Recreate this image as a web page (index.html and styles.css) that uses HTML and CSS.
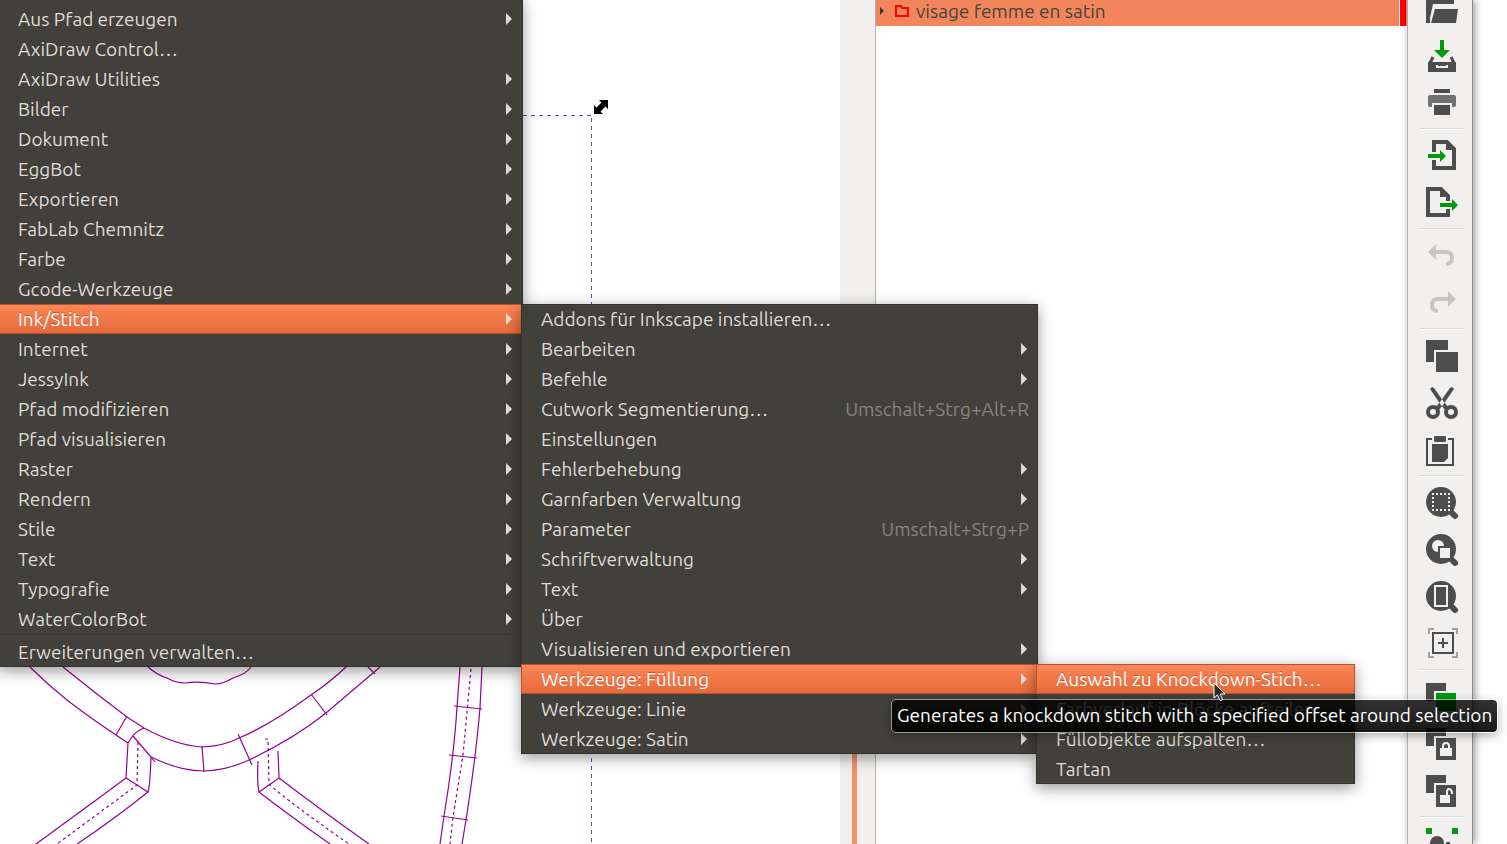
FILE: index.html
```html
<!DOCTYPE html>
<html lang="de">
<head>
    <meta charset="UTF-8">
    <meta name="viewport" content="width=device-width, initial-scale=1.0">
    <title>Inkscape</title>
    <link rel="stylesheet" href="styles.css">
</head>
<body>
    <div class="app">
        <main class="canvas">
            <svg class="drawing" width="620" height="844" viewBox="0 0 620 844">
                <!-- selection frame -->
                <path class="selection" d="M523 115.500H591M591.500 118V844"/>
                <path d="M599 100H608V109L605.500 106.500L600.500 111.500L603 114H594V105L596.500 107.500L601.500 102.500Z"/>
                <g class="outline">
                    <path d="M30 667Q48 685 67 700Q90 718 128 743"/>
                    <path d="M63 667Q95 693 127 717L144 728Q175 745 202 747Q224 746 239 738Q270 725 311 695Q329 683 346 667"/>
                    <path d="M151 757Q180 771 203 771Q225 771 249 760Q295 738 326 713L380 667"/>
                    <path d="M127 716L116 735M202 746L204 772M238 734L252 765M311 694L327 715M368 667L375 674"/>
                    <path d="M144 728Q136 731 132 737L128 743L126 778L148 792Q150 786 151 757L133 736M151 757L155 762"/>
                    <path d="M126 778Q80 812 36 844M148 792Q113 820 77 844"/>
                    <path d="M258 761Q257 784 259 792L279 778L278 751M279 778Q325 813 369 844M259 792Q290 816 330 844"/>
                    <path d="M148 667Q157 675 167 678Q176 683 185 683C197 681 205 682 215 684Q223 684 233 678Q246 674 251 667"/>
                    <path d="M460 667L457 707Q454 756 444 816L440 844M482 667L480 708Q476 756 466 820L462 844"/>
                    <path d="M454 706L482 709M449 755L477 758M441 816L468 820"/>
                    <path class="dashes" d="M138 742L137 785L57 844M265 739H268L269 784Q290 803 349 844M471 669L463 755L453 817L450 844"/>
                </g>
            </svg>
        </main>

        <div class="gutter"></div>

        <section class="objects">
            <div class="object-row">
                <svg class="object-expander" width="6" height="8" viewBox="0 0 6 8"><path d="M1 0L5 4L1 8Z"/></svg>
                <svg class="object-folder" width="14" height="12" viewBox="0 0 14 12"><path d="M1 11V1H6L7 3H13V11Z"/></svg>
                <span>visage femme en satin</span>
                <span class="object-color"></span>
            </div>
        </section>

        <div class="toolbar">
            <button aria-label="Öffnen"><svg viewBox="0 0 32 32">
                <path d="M0 2H18L20 8H28V12H7L4 26V31H0Z"/><path d="M9 17H32L30 31H5Z"/></svg></button>
            <button aria-label="Speichern"><svg viewBox="0 0 32 32">
                <path class="green" d="M14 1H18V11H24L16 19L8 11H14Z"/>
                <path d="M2 23H30V33H2ZM10 26V29H22V26H20V27H12V26Z" fill-rule="evenodd"/>
                <path class="stroke" d="M4 24L7 18M28 24L25 18" stroke-width="3"/></svg></button>
            <button aria-label="Drucken"><svg viewBox="0 0 32 32">
                <path d="M8 3H24V7H8ZM8 19H24V29H8Z"/><path class="gray" d="M4 9H28Q30 9 30 11V19Q30 21 28 21H26V17H6V21H4Q2 21 2 19V11Q2 9 4 9Z"/></svg></button>
            <hr>
            <button aria-label="Importieren"><svg viewBox="0 0 32 32">
                <path class="stroke" d="M8 13V3H21L28 10V29H8V21" stroke-width="4"/><path d="M20 3V11H29Z"/>
                <path class="green" d="M2 15H14V11L20 17L14 23V19H2Z"/></svg></button>
            <button aria-label="Exportieren"><svg viewBox="0 0 32 32">
                <path class="stroke" d="M22 15V10L15 3H2V29H22V23" stroke-width="4"/><path d="M14 3V11H23Z"/>
                <path class="green" d="M14 17H26V13L32 19L26 25V21H14Z"/></svg></button>
            <hr>
            <button aria-label="Rückgängig" disabled><svg viewBox="0 0 32 32">
                <path d="M2 13L10 5V21Z"/><path class="stroke" d="M9 13H20Q26 13 26 19T20 25" stroke-width="4"/></svg></button>
            <button aria-label="Wiederherstellen" disabled><svg viewBox="0 0 32 32">
                <path d="M30 13L22 5V21Z"/><path class="stroke" d="M23 13H12Q6 13 6 19T12 25" stroke-width="4"/></svg></button>
            <hr>
            <button aria-label="Kopieren"><svg viewBox="0 0 32 32">
                <path d="M0 1H22V11H8V23H0ZM10 13H32V33H10Z"/></svg></button>
            <button aria-label="Ausschneiden"><svg viewBox="0 0 32 32">
                <path d="M4 3L6 1L8 2L18 16L23 22L20 25L15 19ZM28 3L26 1L24 2L14 16L9 22L12 25L17 19Z"/>
                <circle class="stroke" cx="7" cy="26" r="5" stroke-width="4"/><circle class="stroke" cx="25" cy="26" r="5" stroke-width="4"/></svg></button>
            <button aria-label="Einfügen"><svg viewBox="0 0 32 32">
                <path class="stroke" d="M6 6H1V32H27V6H22" stroke-width="2"/><rect x="8" y="3" width="12" height="6" rx="1"/>
                <path d="M6 11H22V25L18 29H6Z"/></svg></button>
            <hr>
            <button aria-label="Auswahl zoomen"><svg viewBox="0 0 32 32">
                <circle cx="15" cy="16" r="15"/><path class="handle" d="M24 25L29 30"/>
                <path class="light-stroke" d="M6 8H25M6 24H25M7 11V23M23 11V23" stroke-dasharray="2 2"/></svg></button>
            <button aria-label="Zeichnung zoomen"><svg viewBox="0 0 32 32">
                <circle cx="15" cy="16" r="15"/><path class="handle" d="M24 25L29 30"/>
                <circle class="light" cx="12" cy="13" r="6"/><path d="M12 13H26V27H12Z"/><path class="light" d="M14 15H24V25H14Z"/></svg></button>
            <button aria-label="Seite zoomen"><svg viewBox="0 0 32 32">
                <circle cx="15" cy="16" r="15"/><path class="handle" d="M24 25L29 30"/>
                <path class="light-stroke" d="M9 6H21V26H9Z"/></svg></button>
            <button aria-label="Seite zentrieren"><svg viewBox="0 0 32 32">
                <path class="corner" d="M3 7V2H8M26 2H31V7M31 25V30H26M8 30H3V25"/>
                <path class="stroke" d="M7 6H27V26H7ZM12 16H22M17 11V21" stroke-width="2"/></svg></button>
            <hr>
            <button aria-label="Duplizieren"><svg viewBox="0 0 32 32">
                <path d="M0 3H20V11H8V21H0Z"/><path class="green" d="M10 13H30V31H10Z"/></svg></button>
            <button aria-label="Klonen"><svg viewBox="0 0 32 32">
                <path d="M0 1H20V9H8V19H0ZM10 11H30V33H10Z"/><path class="light" d="M14 21H26V29H14Z"/>
                <path class="light-stroke" d="M17 22V19Q17 16 20 16T23 19V22"/></svg></button>
            <button aria-label="Klonverbindung auftrennen"><svg viewBox="0 0 32 32">
                <path d="M0 1H20V9H8V19H0ZM10 11H30V33H10Z"/><path class="light" d="M14 21H24V29H14Z"/>
                <path class="light-stroke" d="M21 22V18Q21 15 23 15T26 18V20"/></svg></button>
            <hr>
            <button aria-label="Gruppieren"><svg viewBox="0 0 32 32">
                <path class="green" d="M0 1H6V7H0ZM26 1H32V7H26Z"/><circle cx="11" cy="16" r="7"/><path d="M20 15H24V20H20Z"/></svg></button>
        </div>
        <div class="margin"></div>
    </div>

    <ul class="menu menu-extensions">
        <li><button class="has-submenu">Aus Pfad erzeugen</button></li>
        <li><button>AxiDraw Control…</button></li>
        <li><button class="has-submenu">AxiDraw Utilities</button></li>
        <li><button class="has-submenu">Bilder</button></li>
        <li><button class="has-submenu">Dokument</button></li>
        <li><button class="has-submenu">EggBot</button></li>
        <li><button class="has-submenu">Exportieren</button></li>
        <li><button class="has-submenu">FabLab Chemnitz</button></li>
        <li><button class="has-submenu">Farbe</button></li>
        <li><button class="has-submenu">Gcode-Werkzeuge</button></li>
        <li>
            <button class="has-submenu active">Ink/Stitch</button>
            <ul class="menu menu-inkstitch">
                <li><button>Addons für Inkscape installieren…</button></li>
                <li><button class="has-submenu">Bearbeiten</button></li>
                <li><button class="has-submenu">Befehle</button></li>
                <li><button>Cutwork Segmentierung… <kbd>Umschalt+Strg+Alt+R</kbd></button></li>
                <li><button>Einstellungen</button></li>
                <li><button class="has-submenu">Fehlerbehebung</button></li>
                <li><button class="has-submenu">Garnfarben Verwaltung</button></li>
                <li><button>Parameter <kbd>Umschalt+Strg+P</kbd></button></li>
                <li><button class="has-submenu">Schriftverwaltung</button></li>
                <li><button class="has-submenu">Text</button></li>
                <li><button>Über</button></li>
                <li><button class="has-submenu">Visualisieren und exportieren</button></li>
                <li>
                    <button class="has-submenu active">Werkzeuge: Füllung</button>
                    <ul class="menu menu-fill">
                        <li>
                            <button class="active">Auswahl zu Knockdown-Stich…</button>
                            <div class="tooltip" role="tooltip">Generates a knockdown stitch with a specified offset around selection</div>
                            <svg class="pointer" width="14" height="20" viewBox="0 0 14 20"><path d="M1 1V16L4.500 13L7 18.500L9.500 17.500L7.200 12H12Z"/></svg>
                        </li>
                        <li><button>Farbverlauf in Blöcke aufteilen</button></li>
                        <li><button>Füllobjekte aufspalten…</button></li>
                        <li><button>Tartan</button></li>
                    </ul>
                </li>
                <li><button class="has-submenu">Werkzeuge: Linie</button></li>
                <li><button class="has-submenu">Werkzeuge: Satin</button></li>
            </ul>
        </li>
        <li><button class="has-submenu">Internet</button></li>
        <li><button class="has-submenu">JessyInk</button></li>
        <li><button class="has-submenu">Pfad modifizieren</button></li>
        <li><button class="has-submenu">Pfad visualisieren</button></li>
        <li><button class="has-submenu">Raster</button></li>
        <li><button class="has-submenu">Rendern</button></li>
        <li><button class="has-submenu">Stile</button></li>
        <li><button class="has-submenu">Text</button></li>
        <li><button class="has-submenu">Typografie</button></li>
        <li><button class="has-submenu">WaterColorBot</button></li>
        <li class="divided"><button>Erweiterungen verwalten…</button></li>
    </ul>
</body>
</html>
```

FILE: styles.css
```css
* {
    box-sizing: border-box;
}

body {
    margin: 0;
    overflow: hidden;
    background: #fff;
    font-family: Ubuntu, "Noto Sans", sans-serif;
    font-size: 19px;
}

button {
    border: 0;
    background: none;
    font: inherit;
    color: inherit;
}

/* Main window */
.app {
    display: flex;
    height: 100vh;
    overflow: hidden;
}

.canvas {
    flex: 1;
    overflow: hidden;
}

.drawing {
    display: block;
}

.selection {
    fill: none;
    stroke: #5353c8;
    stroke-dasharray: 4 4;
}

.outline {
    fill: none;
    stroke: #960096;
    stroke-width: 1.2;
}

.dashes {
    stroke-dasharray: 3 3;
}

.gutter {
    width: 35px;
    padding: 0 18px 0 12px;
    background: #f1f0ee;
}

.gutter::before {
    content: "";
    display: block;
    height: 100%;
    background: linear-gradient(transparent 500px, #f4906a 500px);
}

.objects {
    width: 532px;
    border-left: 1px solid #b6b3ae;
    background: #fff;
}

.object-row {
    display: flex;
    align-items: center;
    height: 26px;
    padding: 0 1px 4px 3px;
    background: #f2855b;
    color: #45443f;
}

.object-expander {
    margin-right: 10px;
    fill: #3c3b37;
}

.object-folder {
    margin-right: 7px;
    fill: none;
    stroke: #f00;
    stroke-width: 2;
}

.object-color {
    width: 7px;
    height: 26px;
    margin: 4px 0 0 auto;
    border-left: 1px solid #fff;
    background: #f00;
}

/* Command bar */
.toolbar {
    width: 66px;
    padding: 0 7px 0 11px;
    border-left: 1px solid #b6b3ae;
    border-right: 1px solid #8c8a86;
    background: #f1f0ee;
    box-shadow: 2px 0 8px rgba(0, 0, 0, 0.4);
}

.toolbar button {
    display: block;
    height: 47px;
    padding: 7px 7px 8px;
}

.toolbar button:first-child {
    margin-top: -15px;
}

.toolbar svg {
    display: block;
    width: 32px;
    height: 32px;
    overflow: visible;
    fill: #4d4d4d;
    stroke-width: 2;
}

.toolbar button:disabled {
    opacity: 0.25;
}

.toolbar hr {
    height: 2px;
    margin: 2px 0;
    border: 0;
    border-top: 1px solid #dcdad7;
    border-bottom: 1px solid #fff;
}

.toolbar .stroke {
    fill: none;
    stroke: #4d4d4d;
}

.toolbar .handle {
    stroke: #4d4d4d;
    stroke-width: 6;
    stroke-linecap: round;
}

.toolbar .corner {
    fill: none;
    stroke: #a3a2a1;
}

.toolbar .light {
    fill: #f1f0ee;
}

.toolbar .light-stroke {
    fill: none;
    stroke: #f1f0ee;
}

.toolbar .green {
    fill: #00980f;
}

.toolbar .gray {
    fill: #707070;
}

.margin {
    width: 34px;
}

/* Menus */
.menu {
    position: absolute;
    margin: 0;
    padding: 0;
    list-style: none;
    background: #42403a;
    color: #dfdbd2;
    box-shadow: inset 0 0 0 1px #33322e, 0 4px 14px rgba(0, 0, 0, 0.4);
}

.menu li {
    position: relative;
}

.menu button {
    display: flex;
    align-items: center;
    justify-content: space-between;
    width: 100%;
    height: 30px;
    padding: 0 9px 0 20px;
    line-height: 30px;
    white-space: nowrap;
}

.menu .active {
    background: linear-gradient(#fb8757, #e5683a);
    box-shadow: inset 0 0 0 1px #b9532c;
    color: #fff;
    text-shadow: 0 -1px rgba(0, 0, 0, 0.25);
}

.has-submenu::after {
    content: "";
    border: 6px solid transparent;
    border-left-color: #dfdbd2;
    border-right: 0;
}

.menu kbd {
    font: inherit;
    color: #85837c;
}

/* opened further up, so its top and left edges are off screen */
.menu-extensions {
    top: -2px;
    left: -2px;
    width: 525px;
    padding-top: 6px;
}

.menu button.has-submenu {
    padding-right: 11px;
}

.menu-inkstitch {
    top: 0;
    left: calc(100% - 2px);
    width: 517px;
}

.menu-fill {
    top: 0;
    left: calc(100% - 2px);
    width: 319px;
}

.divided {
    padding-top: 2px;
    border-top: 1px solid #383732;
}

.tooltip {
    position: absolute;
    z-index: 1;
    top: 35px;
    left: -145px;
    padding: 0 5px 2px;
    border: 1px solid rgba(255, 255, 255, 0.45);
    border-radius: 5px;
    background: linear-gradient(rgba(0, 0, 0, 0.8), rgba(0, 0, 0, 0.9)) padding-box;
    box-shadow: 0 3px 10px rgba(0, 0, 0, 0.3);
    color: #fff;
    line-height: 30px;
    white-space: nowrap;
}

.pointer {
    position: absolute;
    z-index: 2;
    top: 18px;
    left: 177px;
    fill: #2b2b2b;
    stroke: #fff;
}
```
